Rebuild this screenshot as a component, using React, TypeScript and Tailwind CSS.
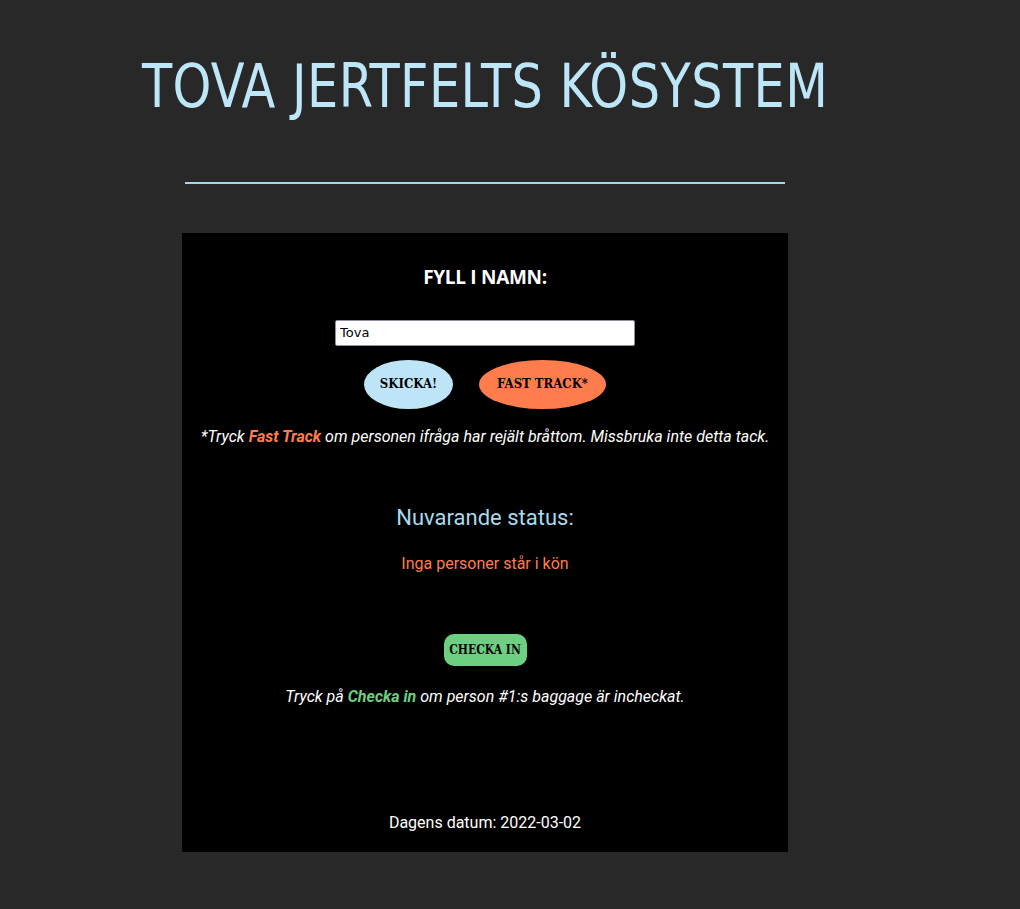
import React, { useState } from 'react';

const App: React.FC = () => {
  const [name, setName] = useState('Tova');

  return (
    <div className="min-h-[909px] bg-[#282828] overflow-hidden" style={{ fontFamily: 'Roboto, "Liberation Sans", sans-serif' }}>
      <div className="w-[970px] flex flex-col items-center">
        <h1 className="mt-[48px] h-[76px] text-[60px] leading-[76px] text-[#bde6f8] tracking-[0.5px] whitespace-nowrap [font-family:'DejaVu_Sans_Condensed',sans-serif] [transform:scaleX(0.915)]">
          TOVA JERTFELTS KÖSYSTEM
        </h1>
        <div className="mt-[58px] w-[600px] h-[2px] bg-[#a8d6ec]" />

        <div className="mt-[49px] w-[606px] h-[619px] bg-black flex flex-col items-center">
          <h2 className="mt-[30px] text-[19px] font-bold text-white [font-family:'Open_Sans',sans-serif] tracking-[-0.3px]">
            FYLL I NAMN:
          </h2>
          <input
            value={name}
            onChange={e => setName(e.target.value)}
            className="mt-[28px] w-[300px] h-[26px] bg-white border border-[#8f8f9d] rounded-[2px] px-[4px] text-[13px] text-black outline-none [font-family:'DejaVu_Sans',sans-serif]"
          />
          <div className="mt-[14px] flex gap-[26px]">
            <button className="w-[89px] h-[49px] rounded-[50%] bg-[#bee5f7] text-black text-[13px] font-bold [font-family:'DejaVu_Serif_Condensed','DejaVu_Serif',serif]">
              SKICKA!
            </button>
            <button className="w-[127px] h-[49px] rounded-[50%] bg-[#ff7d4d] text-black text-[13px] font-bold [font-family:'DejaVu_Serif_Condensed','DejaVu_Serif',serif]">
              FAST TRACK*
            </button>
          </div>
          <p className="mt-[16px] text-[16px] italic text-white">
            *Tryck <span className="font-bold text-[#ff7d4d]">Fast Track</span> om personen ifråga har rejält bråttom. Missbruka inte detta tack.
          </p>

          <h3 className="mt-[52px] text-[22px] text-[#a8daf0]">Nuvarande status:</h3>
          <p className="mt-[18px] text-[16px] text-[#ff7d4d]">Inga personer står i kön</p>

          <button className="mt-[58px] w-[83px] h-[32px] rounded-[10px] bg-[#6ccf82] text-black text-[12px] font-bold [font-family:'DejaVu_Serif_Condensed','DejaVu_Serif',serif]">
            CHECKA IN
          </button>
          <p className="mt-[19px] text-[16px] italic text-white">
            Tryck på <span className="font-bold text-[#6ccf82]">Checka in</span> om person #1:s baggage är incheckat.
          </p>

          <p className="mt-[102px] text-[16px] text-white">Dagens datum: 2022-03-02</p>
        </div>
      </div>
    </div>
  );
};

export default App;
